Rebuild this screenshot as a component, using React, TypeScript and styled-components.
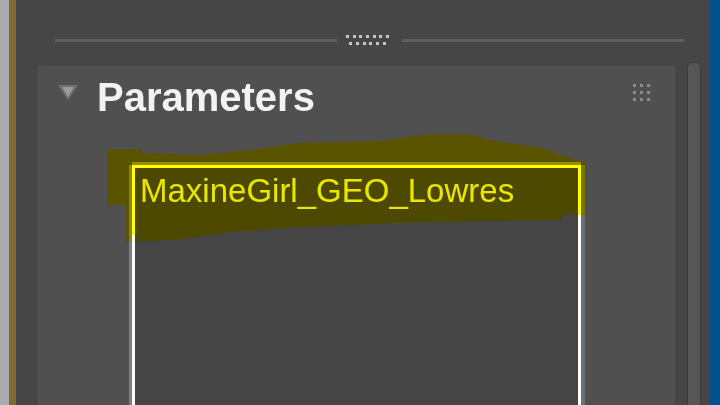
import React from "react";
import styled, { createGlobalStyle } from "styled-components";

const GlobalStyle = createGlobalStyle`
  html, body {
    margin: 0;
    padding: 0;
    background: #464646;
  }
  * {
    box-sizing: border-box;
  }
`;

const Screen = styled.div`
  position: relative;
  width: 720px;
  height: 405px;
  overflow: hidden;
  display: flex;
  flex-direction: row;
  font-family: "Liberation Sans", Arial, sans-serif;
`;

const Edge = styled.div<{ $w: number; $color: string }>`
  flex: 0 0 ${(p) => p.$w}px;
  background: ${(p) => p.$color};
`;

const Workspace = styled.div`
  flex: 1;
  display: flex;
  flex-direction: column;
  background: #464646;
`;

const DividerBar = styled.div`
  flex: 0 0 62px;
  display: flex;
  align-items: center;
  padding: 18px 26px 0 39px;
`;

const DividerLine = styled.div`
  flex: 1;
  height: 3px;
  background: #5e5e5e;
`;

const DotGroup = styled.div`
  display: flex;
  flex-direction: column;
  align-items: center;
  gap: 3.7px;
  margin: 0 13px 0 9px;
`;

const DotRow = styled.div`
  display: flex;
  gap: 3.7px;
`;

const Dot = styled.span<{ $color?: string }>`
  display: block;
  width: 3px;
  height: 3px;
  background: ${(p) => p.$color || "#c4c4c4"};
`;

const Body = styled.div`
  flex: 1;
  display: flex;
  flex-direction: row;
  padding-left: 22px;
`;

const Panel = styled.div`
  flex: 0 0 637px;
  margin-top: 3px;
  display: flex;
  flex-direction: column;
  background: #505050;
  border-top: 1px solid #4a4a4a;
  border-radius: 3px 3px 0 0;
`;

const PanelHeader = styled.div`
  flex: 0 0 96px;
  display: flex;
  align-items: flex-start;
  padding: 0 25px 0 20px;
`;

const Caret = styled.svg`
  margin-top: 19px;
  flex: 0 0 20px;
`;

const Title = styled.h1`
  margin: 12px 0 0 19px;
  font-size: 40px;
  line-height: 39px;
  font-weight: 700;
  color: #f2f2f2;
`;

const Spacer = styled.div`
  flex: 1;
`;

const Grip = styled.div`
  margin-top: 18px;
  display: grid;
  grid-template-columns: repeat(3, 3px);
  grid-auto-rows: 3px;
  gap: 4px;
`;

const ListBox = styled.div`
  flex: 1;
  width: 449px;
  margin: 3px 0 0 94px;
  background: #454545;
  border-left: 3px solid #ffffff;
  border-right: 3px solid #ffffff;
  box-shadow: -3px 0 0 #7b7f87, 4px 0 0 #6c7079;
`;

const ListRow = styled.div<{ $selected?: boolean }>`
  position: relative;
  height: 50px;
  margin: 0 -3px;
  padding: 6px 0 0 5px;
  border: 3px solid ${(p) => (p.$selected ? "#ffff00" : "transparent")};
  border-bottom: 0;
  box-shadow: 0 -3px 0 ${(p) => (p.$selected ? "#8a8a20" : "transparent")};
  font-size: 33px;
  line-height: 34px;
  color: ${(p) => (p.$selected ? "#e6e600" : "#dddddd")};
  white-space: nowrap;

  &::after {
    content: "";
    position: absolute;
    left: -3px;
    top: 100%;
    width: 3px;
    height: 20px;
    background: ${(p) => (p.$selected ? "#ffff00" : "transparent")};
  }
`;

const ScrollTrack = styled.div`
  flex: 0 0 14px;
  margin: 0 9px 0 12px;
  background: #565656;
  border: 1px solid #3c3c3c;
  border-bottom: 0;
  border-radius: 5px 5px 0 0;
`;

const Highlight = styled.svg`
  position: absolute;
  left: 0;
  top: 0;
  pointer-events: none;
  mix-blend-mode: overlay;
`;

const smearPoints = [
  [107, 149], [142, 149], [142, 153], [200, 155], [250, 150], [300, 143],
  [380, 141], [430, 134], [470, 134], [480, 137], [490, 140], [507, 143],
  [538, 147], [552, 151], [560, 155], [578, 160], [585, 162], [585, 215],
  [562, 215], [562, 220], [480, 221], [400, 223], [300, 227], [230, 232],
  [175, 240], [126, 242], [126, 205], [107, 205],
]
  .map((p) => p.join(","))
  .join(" ");

export default function App() {
  return (
    <>
      <GlobalStyle />
      <Screen>
        <Edge $w={9} $color="#ababab" />
        <Edge $w={7} $color="#7e6a34" />
        <Workspace>
          <DividerBar>
            <DividerLine />
            <DotGroup>
              <DotRow>
                {Array.from({ length: 7 }).map((_, i) => (
                  <Dot key={i} />
                ))}
              </DotRow>
              <DotRow>
                {Array.from({ length: 6 }).map((_, i) => (
                  <Dot key={i} />
                ))}
              </DotRow>
            </DotGroup>
            <DividerLine />
          </DividerBar>
          <Body>
            <Panel>
              <PanelHeader>
                <Caret width="20" height="16" viewBox="0 0 20 16">
                  <polygon points="0,0 20,0 10,15" fill="#707070" />
                  <polygon points="4,2 16,2 10,12" fill="#9a9a9a" />
                </Caret>
                <Title>Parameters</Title>
                <Spacer />
                <Grip>
                  {Array.from({ length: 9 }).map((_, i) => (
                    <Dot key={i} $color="#8c8c8c" />
                  ))}
                </Grip>
              </PanelHeader>
              <ListBox>
                <ListRow $selected>MaxineGirl_GEO_Lowres</ListRow>
              </ListBox>
            </Panel>
            <ScrollTrack />
          </Body>
        </Workspace>
        <Edge $w={10} $color="#00528e" />
        <Highlight width="720" height="405" viewBox="0 0 720 405">
          <polygon points={smearPoints} fill="rgb(143,134,0)" />
        </Highlight>
      </Screen>
    </>
  );
}
